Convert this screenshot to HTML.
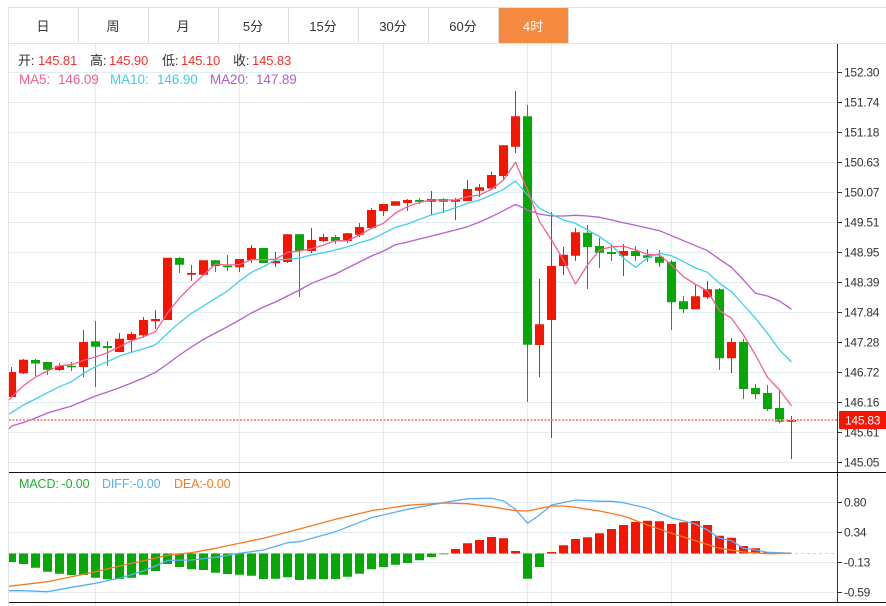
<!DOCTYPE html>
<html><head><meta charset="utf-8"><style>
html,body{margin:0;padding:0;background:#fff;width:886px;height:606px;overflow:hidden}
svg{display:block;position:absolute;left:0;top:0}
text{font-family:"Liberation Sans","Noto Sans CJK SC",sans-serif}
.t{font-size:13px;fill:#333;text-anchor:middle}
.a{font-size:12px;fill:#333;letter-spacing:-.25px}
.h{font-size:13px;fill:#333;letter-spacing:-.1px}
.r{font-size:13px;fill:#f5302a;letter-spacing:-.1px}
.s{font-size:13.5px;letter-spacing:-.1px}
.m{font-size:12.5px;letter-spacing:-.1px}
</style></head><body>
<svg width="886" height="606" viewBox="0 0 886 606">
<defs><clipPath id="c"><rect x="9" y="44" width="828" height="558"/></clipPath></defs>
<!-- frame -->
<g fill="none" stroke="#e3e3e3" stroke-width="1">
<path d="M8 7.5H886M8 43.5H886M8.5 7V606"/>
<path stroke="#dedede" d="M78.5 8V43M148.5 8V43M218.5 8V43M288.5 8V43M358.5 8V43M428.5 8V43M498.5 8V43M568.5 8V43"/>
</g>
<rect x="499" y="8" width="69" height="35" fill="#f48a40"/>
<text class="t" x="43" y="31">日</text>
<text class="t" x="113" y="31">周</text>
<text class="t" x="183" y="31">月</text>
<text class="t" x="253" y="31">5分</text>
<text class="t" x="323" y="31">15分</text>
<text class="t" x="393" y="31">30分</text>
<text class="t" x="463" y="31">60分</text>
<text class="t" x="533" y="31" style="fill:#fff">4时</text>
<!-- grid -->
<path fill="none" stroke="#e2ebf2" stroke-width="1" d="M9 72.5H837M9 102.5H837M9 132.5H837M9 162.5H837M9 192.5H837M9 222.5H837M9 252.5H837M9 282.5H837M9 312.5H837M9 342.5H837M9 372.5H837M9 402.5H837M9 432.5H837M9 462.5H837M9 502.5H837M9 532.5H837M9 562.5H837M9 592.5H837M95.5 44V606M239.5 44V606M383.5 44V606M527.5 44V606M551.5 44V606M671.5 44V606"/>
<g clip-path="url(#c)">
<!-- wicks -->
<path fill="none" stroke="#ee1a10" stroke-width="1" d="M11.5 367V397M23.5 359V374M59.5 363V371M83.5 330V377M119.5 333V352M131.5 332V352M143.5 317V338M155.5 310V329M191.5 265V281M239.5 259V272M251.5 245V263M275.5 252V267M287.5 234V263M311.5 228V253M323.5 234V242M347.5 233V243M359.5 223V237M371.5 208V229M383.5 204V216M407.5 199V211M431.5 191V215M455.5 198V220M467.5 180V201M479.5 184V197M491.5 172V190M503.5 145V180M515.5 91V153M539.5 279V377M551.5 212V438M563.5 247V275M575.5 228V261M623.5 244V276M695.5 284V309M707.5 281V299M731.5 338V373M791.5 416V459"/>
<path fill="none" stroke="#0da80d" stroke-width="1" d="M35.5 359V376M47.5 362V375M71.5 362V371M95.5 321V387M107.5 341V366M179.5 257V273M215.5 260V272M227.5 255V271M299.5 234V297M335.5 235V244M419.5 198V204M443.5 198V213M527.5 105V402M587.5 225V289M599.5 238V268M611.5 244V261M635.5 246V261M647.5 249V262M659.5 250V267M671.5 260V330M683.5 296V313M719.5 288V370M743.5 339V399M755.5 384V399M767.5 385V411M779.5 390V423"/>
<!-- bodies -->
<path fill="#f51500" d="M7 372h9v25h-9zM19 359.7h9v13.6h-9zM55 365.7h9v4.3h-9zM79 342h9v25h-9zM115 338.7h9v13.3h-9zM127 334h9v6h-9zM139 320h9v15.3h-9zM151 319h9v2.3h-9zM163 257.7h9v62.3h-9zM187 273h9v1.7h-9zM199 260.3h9v14.4h-9zM235 259h9v8.3h-9zM247 248h9v12h-9zM271 261h9v2.3h-9zM283 234.3h9v27.7h-9zM307 240h9v11h-9zM319 237h9v4h-9zM343 233.3h9v7.7h-9zM355 227h9v7.7h-9zM367 210h9v18h-9zM379 204h9v7h-9zM391 201.3h9v4.4h-9zM403 200h9v3h-9zM427 199h9v2.7h-9zM451 199.7h9v2h-9zM463 189h9v12h-9zM475 187.3h9v3.4h-9zM487 175h9v13.5h-9zM499 145.3h9v30.7h-9zM511 116.3h9v30.4h-9zM535 324.3h9v20.7h-9zM547 266h9v54h-9zM559 254.7h9v11.3h-9zM571 232.3h9v23.4h-9zM619 251h9v4.7h-9zM691 296.3h9v13h-9zM703 289.3h9v8h-9zM727 342h9v16.3h-9zM787 420h9v1.7h-9z"/>
<path fill="#05a805" d="M31 360h9v3.5h-9zM43 362h9v7.7h-9zM67 365.7h9v1.6h-9zM91 341.3h9v5.4h-9zM103 346h9v2h-9zM175 258h9v6.7h-9zM211 260.3h9v5.7h-9zM223 265.7h9v1.6h-9zM259 248h9v15h-9zM295 234.3h9v16.7h-9zM331 237h9v4h-9zM415 200h9v1.7h-9zM439 199h9v2.7h-9zM523 116.3h9v228.4h-9zM583 232.7h9v14.3h-9zM595 246h9v6.7h-9zM607 252h9v2h-9zM631 251h9v5h-9zM643 255.3h9v2.4h-9zM655 256.7h9v6h-9zM667 261.7h9v40.6h-9zM679 301.3h9v8h-9zM715 289.3h9v69h-9zM739 342h9v47h-9zM751 388h9v6.3h-9zM763 393h9v16h-9zM775 408h9v13.7h-9z"/>
<!-- MAs -->
<g fill="none" stroke-width="1.3" stroke-linejoin="round">
<polyline stroke="#b460cc" points="9,429 11.5,426 23.5,422.5 35.5,418 47.5,413 59.5,409.5 71.5,406 83.5,401 95.5,396 107.5,392 119.5,387.7 131.5,383 143.5,378 155.5,372.3 167.5,364 179.5,355 191.5,347 203.5,339.3 215.5,333 227.5,326.7 239.5,320 251.5,313 263.5,307 275.5,302 287.5,296 299.5,290 311.5,283.3 323.5,278.7 335.5,274 347.5,268 359.5,262 371.5,256 383.5,251 395.5,244.7 407.5,242 419.5,239 431.5,236 443.5,233 455.5,230 467.5,226.7 479.5,222 491.5,216.7 503.5,210.7 515.5,204.3 527.5,210 539.5,214 551.5,216 563.5,216 575.5,215.3 587.5,216 599.5,217.3 611.5,220 623.5,222.7 635.5,225.3 647.5,228 659.5,230.7 671.5,235.7 683.5,240.7 695.5,245.7 707.5,250.7 719.5,259.3 731.5,267.3 743.5,280 755.5,293.3 767.5,296 779.5,301 791.5,309.3"/>
<polyline stroke="#3fd0e4" points="9,414 11.5,412.7 23.5,405 35.5,399 47.5,392.7 59.5,386.7 71.5,381.7 83.5,373.3 95.5,366.7 107.5,361.7 119.5,356 131.5,352.3 143.5,348.7 155.5,344.7 167.5,333.3 179.5,322.7 191.5,313.3 203.5,306 215.5,298.3 227.5,291 239.5,281 251.5,272.3 263.5,266.7 275.5,260 287.5,259.3 299.5,258 311.5,255 323.5,252.7 335.5,250 347.5,246.7 359.5,242.7 371.5,239.3 383.5,233.3 395.5,227.3 407.5,224 419.5,219.3 431.5,215 443.5,211.7 455.5,207.7 467.5,203.3 479.5,200 491.5,195 503.5,189.3 515.5,181 527.5,195 539.5,208.3 551.5,214.3 563.5,220 575.5,223.3 587.5,230 599.5,236.7 611.5,245 623.5,258 635.5,267.3 647.5,258 659.5,253.3 671.5,255.7 683.5,261.7 695.5,268 707.5,272.3 719.5,283.3 731.5,291.7 743.5,305 755.5,318.3 767.5,333.3 779.5,350 791.5,362"/>
<polyline stroke="#f4608f" points="9,400 11.5,397 23.5,385.7 35.5,377 47.5,371 59.5,365.7 71.5,364.7 83.5,360.3 95.5,357 107.5,352.7 119.5,346.7 131.5,340.7 143.5,336.7 155.5,331.7 167.5,313 179.5,298 191.5,286 203.5,275 215.5,264 227.5,265 239.5,264.7 251.5,259.5 263.5,259.7 275.5,259.3 287.5,252.3 299.5,251 311.5,248.7 323.5,245 335.5,240.7 347.5,240.7 359.5,235 371.5,228.3 383.5,223.3 395.5,213 407.5,206.7 419.5,202.3 431.5,200 443.5,200 455.5,200 467.5,196.7 479.5,195 491.5,189.3 503.5,180 515.5,162.3 527.5,190 539.5,221.7 551.5,240 563.5,260 575.5,284 587.5,265 599.5,250 611.5,246.7 623.5,246.3 635.5,250 647.5,254.3 659.5,255 671.5,265 683.5,276.7 695.5,284.3 707.5,291 719.5,310.7 731.5,318.3 743.5,335 755.5,355 767.5,377.3 779.5,390 791.5,405.7"/>
</g>
<!-- price line -->
<path d="M9 420H838" stroke="#fb8f88" stroke-width="2" stroke-dasharray="2 1.5" fill="none"/>
<!-- MACD -->
<path d="M9 553.5H837" stroke="#b4dde8" stroke-width="1" stroke-dasharray="3 3" fill="none"/>
<path fill="#05a805" d="M7 553.5h9V562H7zM19 553.5h9V564h-9zM31 553.5h9v14.2h-9zM43 553.5h9v18.2h-9zM55 553.5h9v20.2h-9zM67 553.5h9V575h-9zM79 553.5h9V575h-9zM91 553.5h9v24.2h-9zM103 553.5h9v25.8h-9zM115 553.5h9V579h-9zM127 553.5h9v24.2h-9zM139 553.5h9v21.2h-9zM151 553.5h9V571h-9zM163 553.5h9V564h-9zM175 553.5h9V567h-9zM187 553.5h9v15.8h-9zM199 553.5h9V570h-9zM211 553.5h9v19.2h-9zM223 553.5h9V574h-9zM235 553.5h9v21.2h-9zM247 553.5h9v22.2h-9zM259 553.5h9V579h-9zM271 553.5h9v25.2h-9zM283 553.5h9v23.8h-9zM295 553.5h9V580h-9zM307 553.5h9v25.8h-9zM319 553.5h9v25.8h-9zM331 553.5h9V579h-9zM343 553.5h9v23.2h-9zM355 553.5h9v20.2h-9zM367 553.5h9v15.8h-9zM379 553.5h9V567h-9zM391 553.5h9v11.2h-9zM403 553.5h9V563h-9zM415 553.5h9v6.8h-9zM427 553.5h9V557h-9zM439 553.5h9v.8h-9zM523 553.5h9v25.2h-9zM535 553.5h9V567h-9z"/>
<path fill="#f51500" d="M451 549h9v4.5h-9zM463 543.3h9v10.2h-9zM475 540h9v13.5h-9zM487 537h9v16.5h-9zM499 538.3h9v15.2h-9zM511 551h9v2.5h-9zM547 552h9v1.5h-9zM559 545.3h9v8.2h-9zM571 539h9v14.5h-9zM583 537.3h9v16.2h-9zM595 533.3h9v20.2h-9zM607 529h9v24.5h-9zM619 525h9v28.5h-9zM631 522h9v31.5h-9zM643 520.7h9v32.8h-9zM655 521.3h9v32.2h-9zM667 524h9v29.5h-9zM679 522.3h9v31.2h-9zM691 521h9v32.5h-9zM703 525h9v28.5h-9zM715 535.7h9v17.8h-9zM727 537.7h9v15.8h-9zM739 546h9v7.5h-9zM751 548.3h9v5.2h-9zM763 552.3h9v1.2h-9z"/>
<g fill="none" stroke-width="1.3" stroke-linejoin="round">
<polyline stroke="#5aaef0" points="9,590.7 23.5,590.7 47.5,591.7 71.5,587.3 95.5,583.3 119.5,578.3 143.5,571 155.5,566 167.5,560.3 191.5,560 215.5,557.3 239.5,553.3 263.5,550 287.5,542.7 299.5,541.7 335.5,531.7 371.5,517.7 407.5,509.3 443.5,502.7 467.5,498.7 491.5,498.3 503.5,501 515.5,509.3 527.5,523.3 539.5,515 551.5,505 575.5,500 599.5,501.3 611.5,501.3 623.5,502.7 647.5,508.3 671.5,517.7 695.5,524 707.5,530 719.5,538.3 731.5,540.7 743.5,548.3 755.5,550 767.5,552.3 791.5,553.3"/>
<polyline stroke="#f67a24" points="9,586.3 47.5,581.7 71.5,576.7 95.5,571.7 119.5,566 143.5,560.7 167.5,555.3 191.5,552.7 215.5,548.3 239.5,543.3 263.5,538.3 299.5,529 335.5,519.3 371.5,510.7 407.5,505.3 443.5,503 467.5,503.7 491.5,506.7 515.5,510.7 527.5,511 551.5,506 563.5,506 575.5,507.3 587.5,509.3 599.5,511 623.5,516 647.5,525 671.5,533.3 695.5,540.7 719.5,548.3 743.5,552 767.5,553.7 791.5,553.3"/>
</g>
</g>
<!-- axis -->
<path fill="none" stroke="#333" stroke-width="1" d="M837.5 44V602M838 72.5h4M838 102.5h4M838 132.5h4M838 162.5h4M838 192.5h4M838 222.5h4M838 252.5h4M838 282.5h4M838 312.5h4M838 342.5h4M838 372.5h4M838 402.5h4M838 432.5h4M838 462.5h4M838 502.5h4M838 532.5h4M838 562.5h4M838 592.5h4"/>
<path fill="none" stroke="#111" stroke-width="1" d="M9 472.5H886M9 602.5H886"/>
<text class="a" x="844" y="76.5">152.30</text>
<text class="a" x="844" y="106.5">151.74</text>
<text class="a" x="844" y="136.5">151.18</text>
<text class="a" x="844" y="166.5">150.63</text>
<text class="a" x="844" y="196.5">150.07</text>
<text class="a" x="844" y="226.5">149.51</text>
<text class="a" x="844" y="256.5">148.95</text>
<text class="a" x="844" y="286.5">148.39</text>
<text class="a" x="844" y="316.5">147.84</text>
<text class="a" x="844" y="346.5">147.28</text>
<text class="a" x="844" y="376.5">146.72</text>
<text class="a" x="844" y="406.5">146.16</text>
<text class="a" x="844" y="436.5">145.61</text>
<text class="a" x="844" y="466.5">145.05</text>
<text class="a" x="844" y="506.5">0.80</text>
<text class="a" x="844" y="536.5">0.34</text>
<text class="a" x="844" y="566.5">-0.13</text>
<text class="a" x="844" y="596.5">-0.59</text>
<rect x="839" y="411" width="47" height="18" fill="#f51500"/>
<text class="a" x="845" y="424.5" style="fill:#fff">145.83</text>
<!-- headers -->
<text class="h" x="18" y="65">开:</text><text class="r" x="38" y="65">145.81</text>
<text class="h" x="90" y="65">高:</text><text class="r" x="109" y="65">145.90</text>
<text class="h" x="162" y="65">低:</text><text class="r" x="181" y="65">145.10</text>
<text class="h" x="233" y="65">收:</text><text class="r" x="252" y="65">145.83</text>
<g fill="#f4608f"><text class="s" x="19" y="84">MA5:</text><text class="s" x="58" y="84">146.09</text></g>
<g fill="#3fd0e4"><text class="s" x="110" y="84">MA10:</text><text class="s" x="157" y="84">146.90</text></g>
<g fill="#b460cc"><text class="s" x="210" y="84">MA20:</text><text class="s" x="256" y="84">147.89</text></g>
<g fill="#1fb02b"><text class="m" x="19" y="488">MACD:</text><text class="m" x="61.5" y="488">-0.00</text></g>
<g fill="#5aaef0"><text class="m" x="102" y="488">DIFF:</text><text class="m" x="132.5" y="488">-0.00</text></g>
<g fill="#f67a24"><text class="m" x="174" y="488">DEA:</text><text class="m" x="202.5" y="488">-0.00</text></g>
</svg>
</body></html>
